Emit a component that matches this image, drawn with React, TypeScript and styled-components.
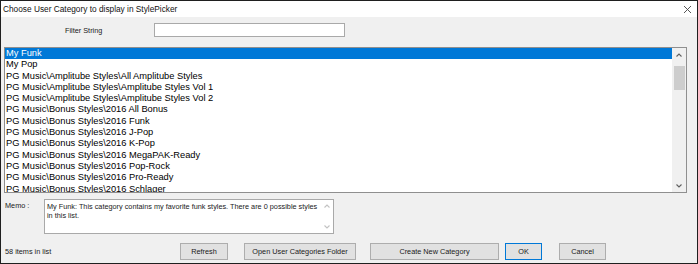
import * as React from "react";
import styled, { createGlobalStyle } from "styled-components";

const GlobalStyle = createGlobalStyle`
  html, body {
    margin: 0;
    padding: 0;
    background: #ffffff;
  }
`;

const Window = styled.div`
  width: 698px;
  height: 264px;
  box-sizing: border-box;
  border: 1px solid #1f1f1f;
  background: #f0f0f0;
  display: flex;
  flex-direction: column;
  font-family: "Liberation Sans", Arial, sans-serif;
  color: #000;
  overflow: hidden;
`;

const TitleBar = styled.div`
  height: 16px;
  background: #ffffff;
  display: flex;
  align-items: center;
  justify-content: space-between;
  padding: 0 5px 0 2px;
`;

const Title = styled.span`
  font-size: 8.3px;
  line-height: 16px;
  white-space: nowrap;
  color: #111;
`;

const CloseIcon = () => (
  <svg width="9" height="9" viewBox="0 0 9 9">
    <path d="M1 1 L8 8 M8 1 L1 8" stroke="#444" strokeWidth="0.9" />
  </svg>
);

const FilterRow = styled.div`
  display: flex;
  align-items: center;
  padding: 6px 0 0 64px;
  height: 14px;
`;

const SmallLabel = styled.span<{ $width?: number }>`
  font-size: 7.3px;
  white-space: nowrap;
  color: #1a1a1a;
  width: ${(p) => (p.$width ? `${p.$width}px` : "auto")};
  flex-shrink: 0;
`;

const FilterInput = styled.div`
  width: 191px;
  height: 14px;
  box-sizing: border-box;
  border: 1px solid #a9a9a9;
  background: #ffffff;
`;

const ListBox = styled.div`
  margin: 10px 0 0 3px;
  width: 683px;
  height: 146px;
  box-sizing: border-box;
  border: 1px solid #8f8f8f;
  background: #ffffff;
  display: flex;
  overflow: hidden;
`;

const Rows = styled.div`
  flex: 1;
  overflow: hidden;
`;

const Row = styled.div<{ $selected?: boolean }>`
  font-size: 9.3px;
  line-height: 11.3px;
  height: 11.3px;
  padding-left: 1px;
  white-space: nowrap;
  background: ${(p) => (p.$selected ? "#0078d7" : "transparent")};
  color: ${(p) => (p.$selected ? "#ffffff" : "#000000")};
`;

const ScrollBar = styled.div<{ $width: number; $bg: string }>`
  width: ${(p) => p.$width}px;
  flex-shrink: 0;
  background: ${(p) => p.$bg};
  display: flex;
  flex-direction: column;
  align-items: center;
`;

const ArrowBox = styled.div<{ $h: number }>`
  height: ${(p) => p.$h}px;
  width: 100%;
  display: flex;
  align-items: center;
  justify-content: center;
  flex-shrink: 0;
`;

const Track = styled.div`
  flex: 1;
  width: 100%;
  display: flex;
  justify-content: center;
`;

const Thumb = styled.div`
  margin-top: 5px;
  width: 11px;
  height: 24px;
  background: #cdcdcd;
`;

const Chevron = ({ up, color }: { up?: boolean; color: string }) => (
  <svg width="6" height="4" viewBox="0 0 6 4">
    <path
      d={up ? "M0.5 3.5 L3 1 L5.5 3.5" : "M0.5 0.5 L3 3 L5.5 0.5"}
      fill="none"
      stroke={color}
      strokeWidth="1.1"
    />
  </svg>
);

const MemoRow = styled.div`
  display: flex;
  align-items: flex-start;
  margin-top: 6px;
  padding-left: 4px;
`;

const MemoLabel = styled(SmallLabel)`
  padding-top: 2px;
`;

const MemoBox = styled.div`
  width: 290px;
  height: 35px;
  box-sizing: border-box;
  border: 1px solid #a9a9a9;
  background: #ffffff;
  display: flex;
`;

const MemoText = styled.div`
  flex: 1;
  font-size: 7.3px;
  line-height: 9px;
  padding: 2px 0 0 2px;
  color: #1a1a1a;
`;

const BottomRow = styled.div`
  display: flex;
  align-items: center;
  margin-top: 9px;
  padding-left: 4px;
`;

const Button = styled.div<{ $width: number; $ml: number; $default?: boolean }>`
  width: ${(p) => p.$width}px;
  margin-left: ${(p) => p.$ml}px;
  height: 17px;
  box-sizing: border-box;
  border: 1px solid ${(p) => (p.$default ? "#0078d7" : "#adadad")};
  background: #e1e1e1;
  font-size: 7.3px;
  color: #1a1a1a;
  display: flex;
  align-items: center;
  justify-content: center;
  white-space: nowrap;
  flex-shrink: 0;
`;

const items = [
  "My Funk",
  "My Pop",
  "PG Music\\Amplitube Styles\\All Amplitube Styles",
  "PG Music\\Amplitube Styles\\Amplitube Styles Vol 1",
  "PG Music\\Amplitube Styles\\Amplitube Styles Vol 2",
  "PG Music\\Bonus Styles\\2016 All Bonus",
  "PG Music\\Bonus Styles\\2016 Funk",
  "PG Music\\Bonus Styles\\2016 J-Pop",
  "PG Music\\Bonus Styles\\2016 K-Pop",
  "PG Music\\Bonus Styles\\2016 MegaPAK-Ready",
  "PG Music\\Bonus Styles\\2016 Pop-Rock",
  "PG Music\\Bonus Styles\\2016 Pro-Ready",
  "PG Music\\Bonus Styles\\2016 Schlager",
];

const App: React.FC = () => (
  <>
    <GlobalStyle />
    <Window>
      <TitleBar>
        <Title>Choose User Category to display in StylePicker</Title>
        <CloseIcon />
      </TitleBar>
      <FilterRow>
        <SmallLabel $width={89}>Filter String</SmallLabel>
        <FilterInput />
      </FilterRow>
      <ListBox>
        <Rows>
          {items.map((item, i) => (
            <Row key={item} $selected={i === 0}>
              {item}
            </Row>
          ))}
        </Rows>
        <ScrollBar $width={14} $bg="#f0f0f0">
          <ArrowBox $h={13}>
            <Chevron up color="#606060" />
          </ArrowBox>
          <Track>
            <Thumb />
          </Track>
          <ArrowBox $h={13}>
            <Chevron color="#606060" />
          </ArrowBox>
        </ScrollBar>
      </ListBox>
      <MemoRow>
        <MemoLabel $width={39}>Memo :</MemoLabel>
        <MemoBox>
          <MemoText>
            My Funk: This category contains my favorite funk styles. There are 0
            possible styles in this list.
          </MemoText>
          <ScrollBar $width={12} $bg="#ffffff">
            <ArrowBox $h={12}>
              <Chevron up color="#c2c2c2" />
            </ArrowBox>
            <Track />
            <ArrowBox $h={12}>
              <Chevron color="#c2c2c2" />
            </ArrowBox>
          </ScrollBar>
        </MemoBox>
      </MemoRow>
      <BottomRow>
        <SmallLabel $width={175}>58 items in list</SmallLabel>
        <Button $width={48} $ml={0}>Refresh</Button>
        <Button $width={112} $ml={16}>Open User Categories Folder</Button>
        <Button $width={129} $ml={14}>Create New Category</Button>
        <Button $width={37} $ml={6} $default>OK</Button>
        <Button $width={47} $ml={17}>Cancel</Button>
      </BottomRow>
    </Window>
  </>
);

export default App;
